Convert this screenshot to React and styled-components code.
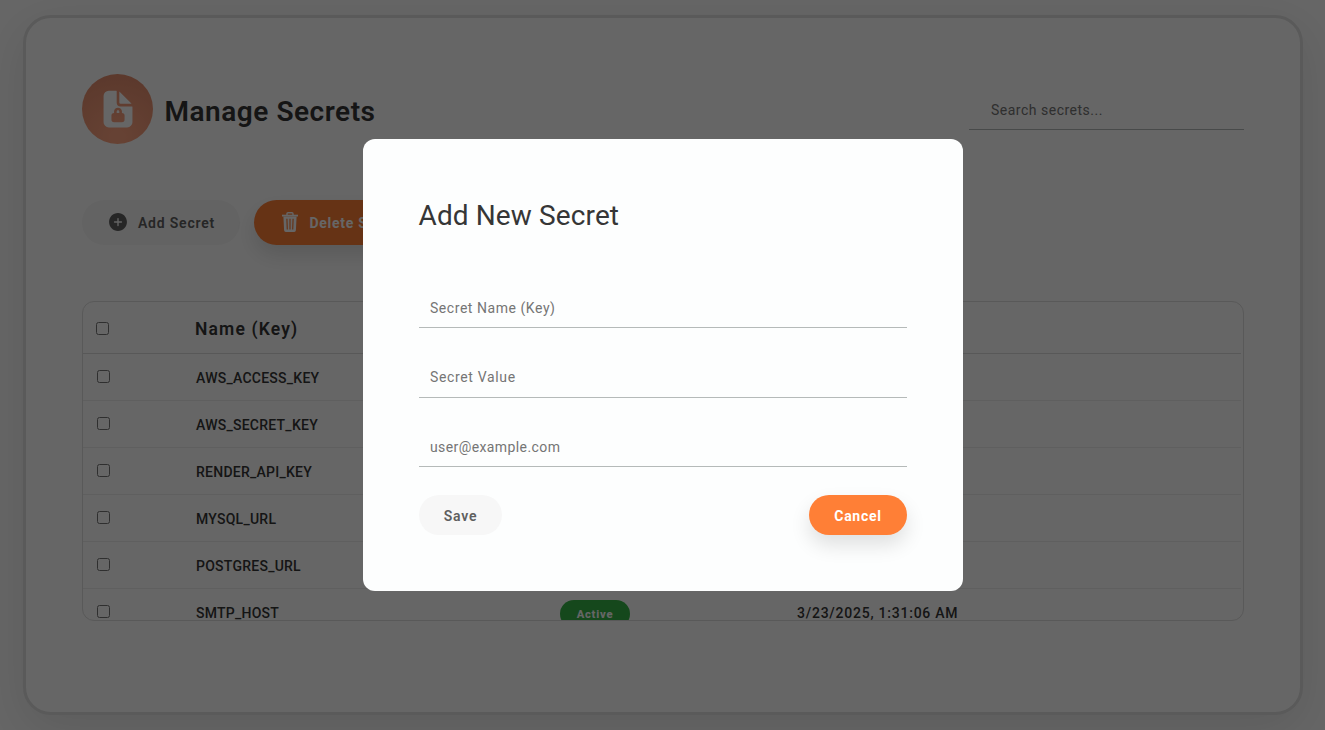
import React from 'react';
import styled, { createGlobalStyle, css } from 'styled-components';
import { IoDocumentLock, IoAddCircle } from 'react-icons/io5';

const GlobalStyle = createGlobalStyle`
  *, *::before, *::after { box-sizing: border-box; }
  body {
    margin: 0;
    height: 730px;
    overflow: hidden;
    background: #fff;
    color: #363636;
    font: 14px/1.5 Roboto, "Liberation Sans", sans-serif;
    letter-spacing: 0.8px;
  }
`;

const Page = styled.main`
  display: flex;
  align-items: center;
  justify-content: center;
  height: 730px;
`;

const Card = styled.section`
  display: flex;
  flex-direction: column;
  gap: 56px;
  width: 1280px;
  height: 700px;
  padding: 56px;
  border: 3px solid #e0e0e0;
  border-radius: 28px;
  background: #fff;
  box-shadow: 0 14px 48px rgba(0, 0, 0, 0.1);
`;

const Header = styled.header`
  display: flex;
  align-items: center;
  justify-content: space-between;
  height: 70px;
`;

const Brand = styled.div`
  display: flex;
  align-items: center;
  gap: 12px;
`;

const Logo = styled.span`
  display: grid;
  place-items: center;
  width: 71px;
  height: 70px;
  padding-left: 1px;
  border-radius: 50%;
  background: radial-gradient(circle at 50% 90%, #ffa582 10%, #e08a6b 100%);
  color: #fff;
  font-size: 42px;

  svg { display: block; }
`;

const PageTitle = styled.h1`
  margin: 5px 0 0;
  color: #363636;
  font-size: 28px;
  font-weight: 600;
  line-height: 42px;
  letter-spacing: 0.53px;
`;

const Field = styled.input`
  display: block;
  width: ${({ $width }) => $width || '100%'};
  height: ${({ $height }) => $height || '41.5px'};
  padding: ${({ $pad }) => $pad || '3px 11.5px 0'};
  border: 0;
  border-bottom: 1px solid #b5bab9;
  outline: 0;
  background: transparent;
  color: #363636;
  font: inherit;
  letter-spacing: ${({ $spacing }) => $spacing || '0.55px'};

  &::placeholder { color: #757575; opacity: 1; }
`;

const Toolbar = styled.div`
  display: flex;
  gap: 14px;
  height: 45px;
`;

const Button = styled.button`
  display: flex;
  align-items: center;
  justify-content: center;
  gap: ${({ $gap }) => $gap || '9px'};
  width: ${({ $width }) => $width};
  height: ${({ $tall }) => ($tall ? '45px' : '40px')};
  padding: 0 0 0 1px;
  border: 0;
  border-radius: 28px;
  background: #f7f7f7;
  color: #5f5f5f;
  font: inherit;
  font-weight: 600;
  letter-spacing: 0.8px;
  white-space: nowrap;

  svg { margin-bottom: 1px; }
  span { padding-top: 2px; }

  ${({ $primary }) =>
    $primary &&
    css`
      background: #ff7f36;
      color: #fff;
      font-weight: 700;
      letter-spacing: 0.75px;
      box-shadow: 0 10px 20px rgba(0, 0, 0, 0.12);
    `}
`;

const TableFrame = styled.div`
  height: 320px;
  padding-right: 2px;
  overflow: hidden;
  border: 1px solid #dedede;
  border-radius: 12px;
`;

const Row = styled.div`
  display: grid;
  grid-template-columns: 113.5px 364px 237px 1fr;
  align-items: center;
  height: 47px;
  border-bottom: 1px solid #ededed;
  color: #363636;
  font-weight: 500;

  ${({ $head }) =>
    $head &&
    css`
      grid-template-columns: 112.5px 364px 237px 1fr;
      height: 52px;
      border-bottom-color: #dbdbdb;
      font-size: 17.5px;
      font-weight: 600;
    `}
`;

const Check = styled.input`
  display: block;
  width: 13px;
  height: 13px;
  margin: ${({ $head }) => ($head ? '2px 0 0 13.5px' : '0 0 1px 14.5px')};
`;

const Cell = styled.span`
  padding-top: 3px;
  letter-spacing: ${({ $spacing }) => $spacing || '0.76px'};
`;

const Badge = styled.span`
  justify-self: start;
  width: 70px;
  height: 28px;
  margin-top: 4px;
  border-radius: 14px;
  background: #36b346;
  color: #fff;
  font-size: 11.2px;
  font-weight: 800;
  line-height: 29px;
  text-align: center;
`;

const Overlay = styled.div`
  position: fixed;
  inset: 0;
  display: flex;
  align-items: center;
  justify-content: center;
  background: rgba(0, 0, 0, 0.6);
`;

const Modal = styled.form`
  width: 600px;
  height: 452px;
  padding: 56px;
  border-radius: 12px;
  background: #fdfefe;
`;

const ModalTitle = styled.h2`
  margin: 0;
  color: #363636;
  font-size: 28px;
  font-weight: 400;
  line-height: 42px;
  letter-spacing: 0.12px;
`;

const Fields = styled.div`
  display: flex;
  flex-direction: column;
  gap: 28px;
  margin-top: 49.5px;
`;

const Actions = styled.div`
  display: flex;
  justify-content: space-between;
  margin-top: 28px;
`;

const TrashIcon = () => (
  <svg width="16" height="20" viewBox="0 0 16 20" fill="none" stroke="currentColor">
    <path d="M5 3.4V1.8Q5 .8 6 .8H10Q11 .8 11 1.8V3.4" strokeWidth="1.4" />
    <path d="M0 3.6H16" strokeWidth="1.8" />
    <path
      fill="currentColor"
      fillRule="evenodd"
      stroke="none"
      d="M1.4 4.4H14.6L13.9 18.3Q13.8 20 12.2 20H3.8Q2.2 20 2.1 18.3ZM4.3 6.8L4.7 17.4H5.9L5.5 6.8ZM7.4 6.8V17.4H8.6V6.8ZM10.5 6.8L10.1 17.4H11.3L11.7 6.8Z"
    />
  </svg>
);

const SECRETS = [
  { name: 'AWS_ACCESS_KEY', date: '3/23/2025, 1:31:06 AM' },
  { name: 'AWS_SECRET_KEY', date: '3/23/2025, 1:31:06 AM' },
  { name: 'RENDER_API_KEY', date: '3/23/2025, 1:31:06 AM' },
  { name: 'MYSQL_URL', date: '3/23/2025, 1:31:06 AM' },
  { name: 'POSTGRES_URL', date: '3/23/2025, 1:31:06 AM' },
  { name: 'SMTP_HOST', date: '3/23/2025, 1:31:06 AM' },
];

export default function App() {
  return (
    <>
      <GlobalStyle />
      <Page>
        <Card>
          <Header>
            <Brand>
              <Logo><IoDocumentLock /></Logo>
              <PageTitle>Manage Secrets</PageTitle>
            </Brand>
            <Field $width="275px" $height="42px" $pad="3px 22.5px 0" $spacing="0.5px" placeholder="Search secrets..." />
          </Header>
          <Toolbar>
            <Button $tall $width="158px"><IoAddCircle size={22} /><span>Add Secret</span></Button>
            <Button $tall $primary $width="186px" $gap="11px"><TrashIcon /><span>Delete Secrets</span></Button>
          </Toolbar>
          <TableFrame>
            <Row $head>
              <Check $head type="checkbox" />
              <Cell $spacing="1.15px">Name (Key)</Cell>
            </Row>
            {SECRETS.map(({ name, date }) => (
              <Row key={name}>
                <Check type="checkbox" />
                <Cell $spacing="0.25px">{name}</Cell>
                <Badge>Active</Badge>
                <Cell>{date}</Cell>
              </Row>
            ))}
          </TableFrame>
        </Card>
      </Page>
      <Overlay>
        <Modal>
          <ModalTitle>Add New Secret</ModalTitle>
          <Fields>
            <Field placeholder="Secret Name (Key)" />
            <Field $spacing="0.65px" $pad="2px 11.5px 0" placeholder="Secret Value" />
            <Field $spacing="0.4px" placeholder="user@example.com" />
          </Fields>
          <Actions>
            <Button type="button" $width="83px"><span>Save</span></Button>
            <Button type="button" $primary $width="98px"><span>Cancel</span></Button>
          </Actions>
        </Modal>
      </Overlay>
    </>
  );
}
